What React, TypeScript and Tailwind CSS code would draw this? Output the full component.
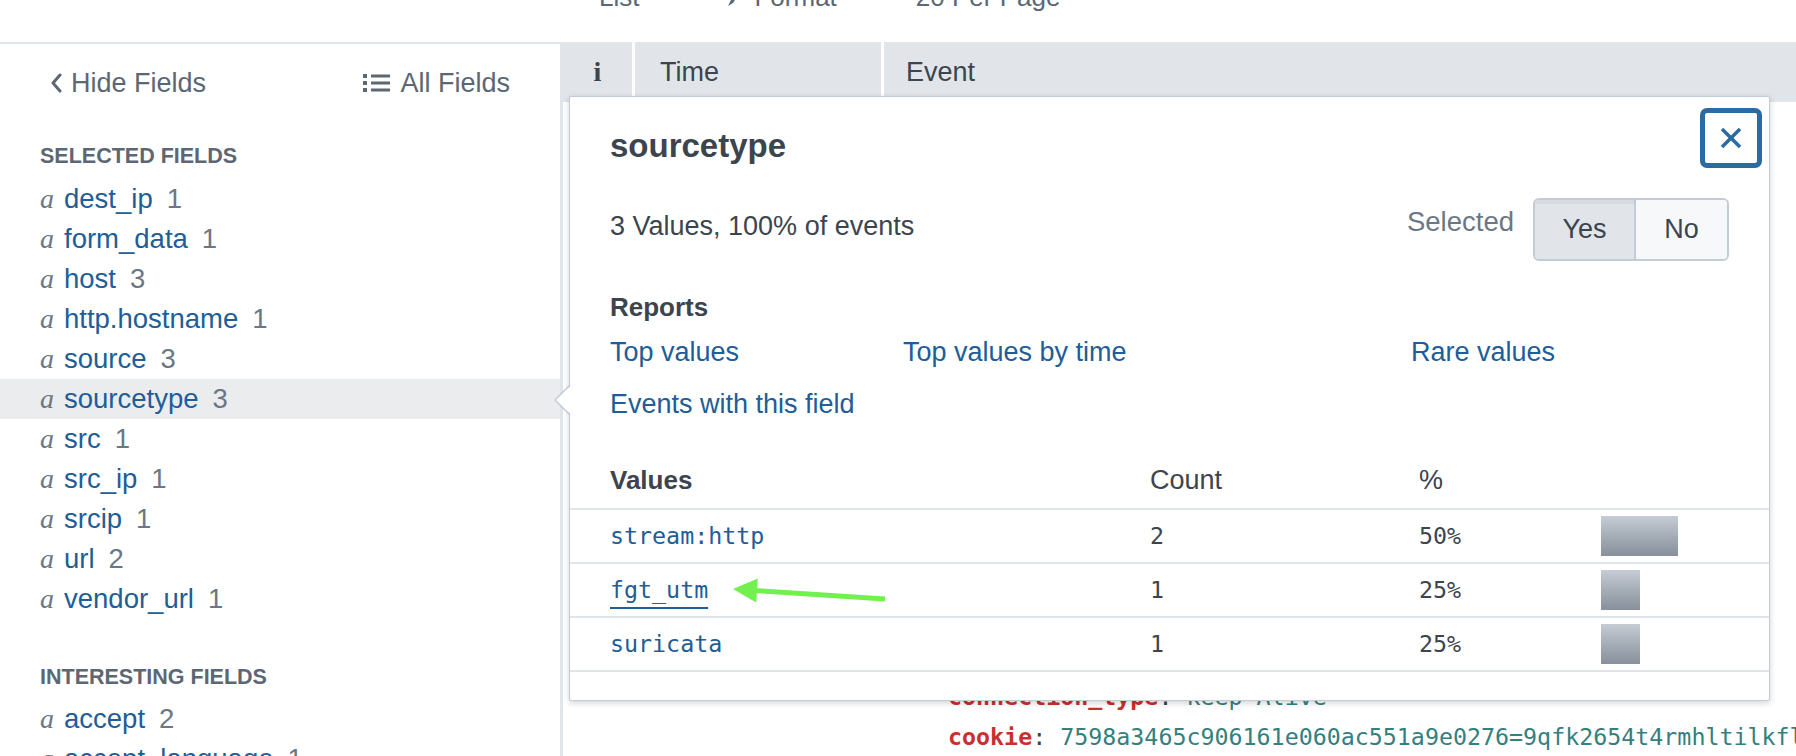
import React from "react"

const selectedFields: [string, number][] = [
  ["dest_ip", 1],
  ["form_data", 1],
  ["host", 3],
  ["http.hostname", 1],
  ["source", 3],
  ["sourcetype", 3],
  ["src", 1],
  ["src_ip", 1],
  ["srcip", 1],
  ["url", 2],
  ["vendor_url", 1],
]
const interestingFields: [string, number][] = [
  ["accept", 2],
  ["accept_language", 1],
]

const topValues = [
  { value: "stream:http", count: 2, pct: "50%", bar: 77, underline: false },
  { value: "fgt_utm", count: 1, pct: "25%", bar: 39, underline: true },
  { value: "suricata", count: 1, pct: "25%", bar: 39, underline: false },
]

function FieldRow({ name, count, active }: { name: string; count: number; active?: boolean }) {
  return (
    <div className={`h-[40px] flex items-center pl-[40px] whitespace-nowrap ${active ? "bg-[#ebecee]" : ""}`}>
      <span className="w-[24px] font-['Liberation_Serif',serif] italic text-[28px] text-[#6b7785] leading-none">a</span>
      <span className="text-[#215d96]">{name}</span>
      <span className="ml-[14px] text-[#6b7785]">{count}</span>
    </div>
  )
}

function Sidebar() {
  return (
    <div className="w-[563px] shrink-0 border-t-2 border-r-[3px] border-[#e1e4e8] text-[27.5px] leading-none">
      <div className="h-[78px] flex items-center justify-between pl-[50px] pr-[50px] text-[27px] text-[#5c6773]">
        <div className="flex items-center">
          <svg width="12" height="20" viewBox="0 0 12 20" fill="none">
            <polyline points="10,2 3,10 10,18" stroke="#5c6773" strokeWidth="3" strokeLinejoin="round" strokeLinecap="round" />
          </svg>
          <span className="ml-[9px]">Hide Fields</span>
        </div>
        <div className="flex items-center">
          <svg width="27" height="18" viewBox="0 0 27 18">
            <rect x="0" y="0" width="4" height="4" fill="#5c6773" />
            <rect x="0" y="7" width="4" height="4" fill="#5c6773" />
            <rect x="0" y="14" width="4" height="4" fill="#5c6773" />
            <rect x="8" y="0.5" width="19" height="3" fill="#5c6773" />
            <rect x="8" y="7.5" width="19" height="3" fill="#5c6773" />
            <rect x="8" y="14.5" width="19" height="3" fill="#5c6773" />
          </svg>
          <span className="ml-[10px]">All Fields</span>
        </div>
      </div>

      <div className="mt-[15px] h-[40px] flex items-center pl-[40px] text-[21.5px] font-bold text-[#5c6773]">
        SELECTED FIELDS
      </div>
      <div className="mt-[2px]">
        {selectedFields.map(([n, c]) => (
          <FieldRow key={n} name={n} count={c} active={n === "sourcetype"} />
        ))}
      </div>

      <div className="mt-[39px] h-[40px] flex items-center pl-[40px] text-[21.5px] font-bold text-[#5c6773]">
        INTERESTING FIELDS
      </div>
      <div className="mt-[1px]">
        {interestingFields.map(([n, c]) => (
          <FieldRow key={n} name={n} count={c} />
        ))}
      </div>
    </div>
  )
}

function Popover() {
  return (
    <div className="absolute left-[6px] top-[54px] w-[1201px] h-[605px] bg-white border border-[#c3cbd4] rounded-[2px] shadow-[0_2px_6px_rgba(0,0,0,0.18)] text-[#3c444d]">
      {/* arrow pointing at the sidebar row */}
      <svg className="absolute left-[-16px] top-[288px]" width="18" height="30" viewBox="0 0 18 30">
        <polygon points="18,0 1,15 18,30" fill="#ffffff" />
        <polyline points="16,0 1,15 16,30" fill="none" stroke="#c3cbd4" strokeWidth="1.5" />
      </svg>

      <button className="absolute top-[11px] right-[7px] w-[62px] h-[60px] rounded-[7px] border-[5px] border-[#2c6aa3] bg-white flex items-center justify-center">
        <svg width="22" height="22" viewBox="0 0 22 22">
          <line x1="2" y1="2" x2="20" y2="20" stroke="#2c6aa3" strokeWidth="3.5" />
          <line x1="20" y1="2" x2="2" y2="20" stroke="#2c6aa3" strokeWidth="3.5" />
        </svg>
      </button>

      <div className="pt-[28px] px-[40px]">
        <div className="h-[40px] flex items-center text-[33px] font-bold leading-none">sourcetype</div>

        <div className="mt-[32px] h-[64px] flex items-center justify-between">
          <span className="text-[27px] leading-none mb-[6px]">3 Values, 100% of events</span>
          <div className="flex items-center">
            <span className="text-[27.5px] leading-none text-[#6b7785] mb-[15px]">Selected</span>
            <div className="ml-[19px] flex h-[63px] rounded-[6px] border-2 border-[#c3cbd4] overflow-hidden text-[27px]">
              <div className="w-[99px] bg-[#e1e4e8] shadow-[inset_0_4px_0_rgba(0,0,0,0.04)] flex items-center justify-center">Yes</div>
              <div className="w-[93px] border-l-2 border-[#c3cbd4] bg-[#f7f8fa] flex items-center justify-center">No</div>
            </div>
          </div>
        </div>

        <div className="mt-[28px] h-[36px] flex items-center text-[26px] font-bold leading-none">Reports</div>
        <div className="mt-[7px] h-[40px] flex items-center text-[27px] text-[#215d96] leading-none">
          <span className="w-[293px]">Top values</span>
          <span className="w-[508px]">Top values by time</span>
          <span>Rare values</span>
        </div>
        <div className="mt-[12px] h-[40px] flex items-center text-[27px] text-[#215d96] leading-none">
          Events with this field
        </div>
      </div>

      <div className="mt-[28px]">
        <div className="h-[58px] flex items-center pl-[40px] border-b-2 border-[#e1e4e8] leading-none">
          <span className="w-[540px] text-[26px] font-bold">Values</span>
          <span className="w-[269px] text-[27px]">Count</span>
          <span className="text-[27px]">%</span>
        </div>
        {topValues.map((r) => (
          <div key={r.value} className="h-[54px] flex items-center pl-[40px] border-b-2 border-[#e1e4e8] font-['DejaVu_Sans_Mono',monospace] text-[23.3px] leading-none">
            <span className={`w-[540px] text-[#215d96] ${r.underline ? "underline underline-offset-[9px] decoration-[1.5px]" : ""}`}>{r.value}</span>
            <span className="w-[269px]">{r.count}</span>
            <span className="w-[182px]">{r.pct}</span>
            <div className="h-[40px] bg-linear-to-b from-[#c5ccd4] to-[#87909b]" style={{ width: r.bar }} />
          </div>
        ))}
      </div>
    </div>
  )
}

export default function App() {
  return (
    <div className="relative w-[1796px] h-[756px] overflow-hidden bg-white font-['Liberation_Sans',Arial,sans-serif]">
      {/* results toolbar, mostly scrolled out of view */}
      <div className="h-[42px] overflow-hidden pl-[599px] text-[26px] text-[#5c6773] leading-none whitespace-nowrap">
        <div className="flex items-start mt-[-16px] h-[26px]">
          <span>List</span>
          <span className="ml-[12px] text-[16px]">▾</span>
          <svg className="ml-[66px]" width="18" height="26" viewBox="0 0 18 26">
            <path d="M16 2 L6 16 L3 22 L8 19 L17 5 Z" fill="#5c6773" />
          </svg>
          <span className="ml-[11px]">Format</span>
          <span className="ml-[79px]">20 Per Page</span>
          <span className="ml-[10px] text-[16px]">▾</span>
        </div>
      </div>

      <div className="flex h-[714px]">
        <Sidebar />

        <div className="flex-1 relative">
          <div className="h-[60px] bg-[#e1e4e8] flex text-[27px] text-[#3c444d] leading-none">
            <div className="w-[69px] flex items-center justify-center font-['Liberation_Serif',serif] font-bold text-[28px]">i</div>
            <div className="w-[249px] border-l-[3px] border-white flex items-center pl-[25px]">Time</div>
            <div className="flex-1 border-l-[3px] border-white flex items-center pl-[22px]">Event</div>
          </div>

          <div className="pl-[385px] pt-[575px] font-['DejaVu_Sans_Mono',monospace] text-[23.3px] leading-[40px] whitespace-pre">
            <div className="h-[40px]">
              <span className="text-[#c9302c] font-bold">connection_type</span>
              <span className="text-[#3c444d]">: </span>
              <span className="text-[#33807f]">keep-Alive</span>
            </div>
            <div className="h-[40px]">
              <span className="text-[#c9302c] font-bold">cookie</span>
              <span className="text-[#3c444d]">: </span>
              <span className="text-[#33807f]">7598a3465c906161e060ac551a9e0276=9qfk2654t4rmhltilkfl</span>
            </div>
          </div>

          <Popover />
        </div>
      </div>

      {/* annotation arrow */}
      <svg className="absolute left-[720px] top-[570px]" width="180" height="45" viewBox="0 0 180 45">
        <line x1="33" y1="20.4" x2="165" y2="29" stroke="#72f04e" strokeWidth="5" />
        <polygon points="13,19 37.8,8.6 36.2,32.6" fill="#72f04e" />
      </svg>
    </div>
  )
}
